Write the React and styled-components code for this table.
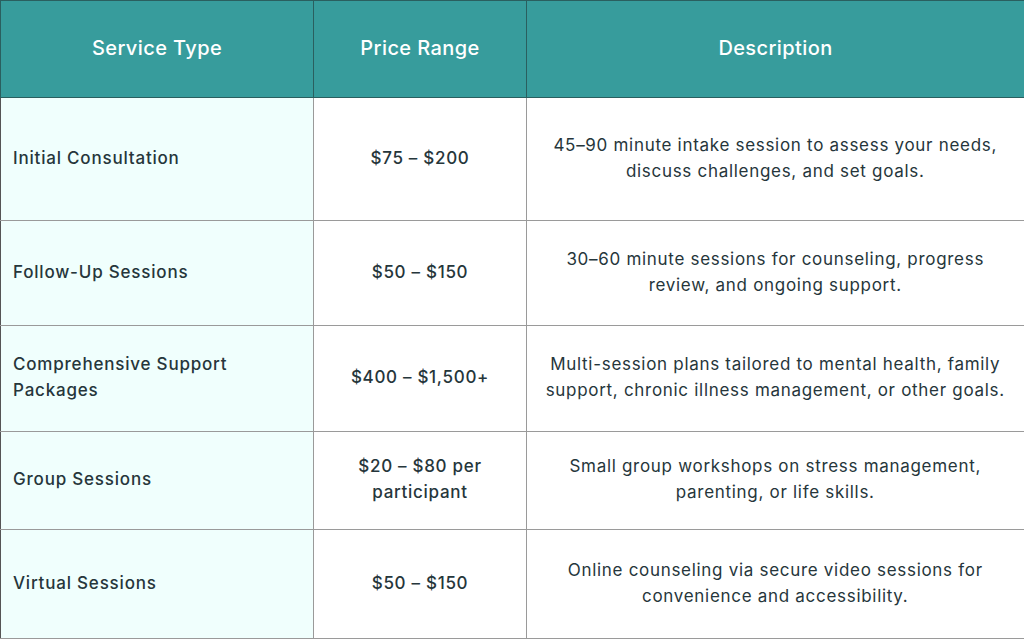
import React from 'react';
import styled, { createGlobalStyle } from 'styled-components';

const GlobalStyle = createGlobalStyle`
  html, body {
    margin: 0;
    padding: 0;
    background: #ffffff;
  }
  body {
    font-family: Inter, "Noto Sans", sans-serif;
  }
`;

const Table = styled.table`
  width: 1024px;
  border-collapse: collapse;
  table-layout: fixed;
  color: #26363b;
`;

const HeaderCell = styled.th`
  height: 93px;
  background: #379c9c;
  color: #ffffff;
  font-size: 20px;
  font-weight: 500;
  letter-spacing: 0.4px;
  text-align: center;
  border: 1px solid #2a5f5f;
  padding: 0 0 3px;
`;

const Row = styled.tr`
  height: ${props => props.h}px;
`;

const ServiceCell = styled.td`
  background: #f0fffd;
  padding: 0 12px 3px;
  font-size: 17px;
  font-weight: 500;
  letter-spacing: 0.8px;
  line-height: 26px;
  text-align: left;
  border: 1px solid #9a9a9a;
  border-left-color: #555;
`;

const PriceCell = styled.td`
  padding: 0 20px 3px;
  font-size: 17px;
  font-weight: 500;
  letter-spacing: 0.7px;
  line-height: 26px;
  text-align: center;
  border: 1px solid #9a9a9a;
  border-left-color: #555;
`;

const DescCell = styled.td`
  padding: 0 12px 3px;
  font-size: 17px;
  font-weight: 400;
  letter-spacing: 0.7px;
  line-height: 26px;
  text-align: center;
  border: 1px solid #9a9a9a;
  border-right: 2px solid #9a9a9a;
`;

const rows = [
  {
    service: 'Initial Consultation',
    price: '$75 – $200',
    desc: '45–90 minute intake session to assess your needs, discuss challenges, and set goals.',
    h: 123,
  },
  {
    service: 'Follow-Up Sessions',
    price: '$50 – $150',
    desc: '30–60 minute sessions for counseling, progress review, and ongoing support.',
    h: 105,
  },
  {
    service: 'Comprehensive Support Packages',
    price: '$400 – $1,500+',
    desc: 'Multi-session plans tailored to mental health, family support, chronic illness management, or other goals.',
    h: 106,
  },
  {
    service: 'Group Sessions',
    price: '$20 – $80 per participant',
    desc: 'Small group workshops on stress management, parenting, or life skills.',
    h: 98,
  },
  {
    service: 'Virtual Sessions',
    price: '$50 – $150',
    desc: 'Online counseling via secure video sessions for convenience and accessibility.',
    h: 109,
  },
];

const App = () => (
  <>
    <GlobalStyle />
    <Table>
      <colgroup>
        <col style={{ width: 313 }} />
        <col style={{ width: 213 }} />
        <col style={{ width: 498 }} />
      </colgroup>
      <thead>
        <tr>
          <HeaderCell>Service Type</HeaderCell>
          <HeaderCell>Price Range</HeaderCell>
          <HeaderCell>Description</HeaderCell>
        </tr>
      </thead>
      <tbody>
        {rows.map(row => (
          <Row key={row.service} h={row.h}>
            <ServiceCell>{row.service}</ServiceCell>
            <PriceCell>{row.price}</PriceCell>
            <DescCell>{row.desc}</DescCell>
          </Row>
        ))}
      </tbody>
    </Table>
  </>
);

export default App;
